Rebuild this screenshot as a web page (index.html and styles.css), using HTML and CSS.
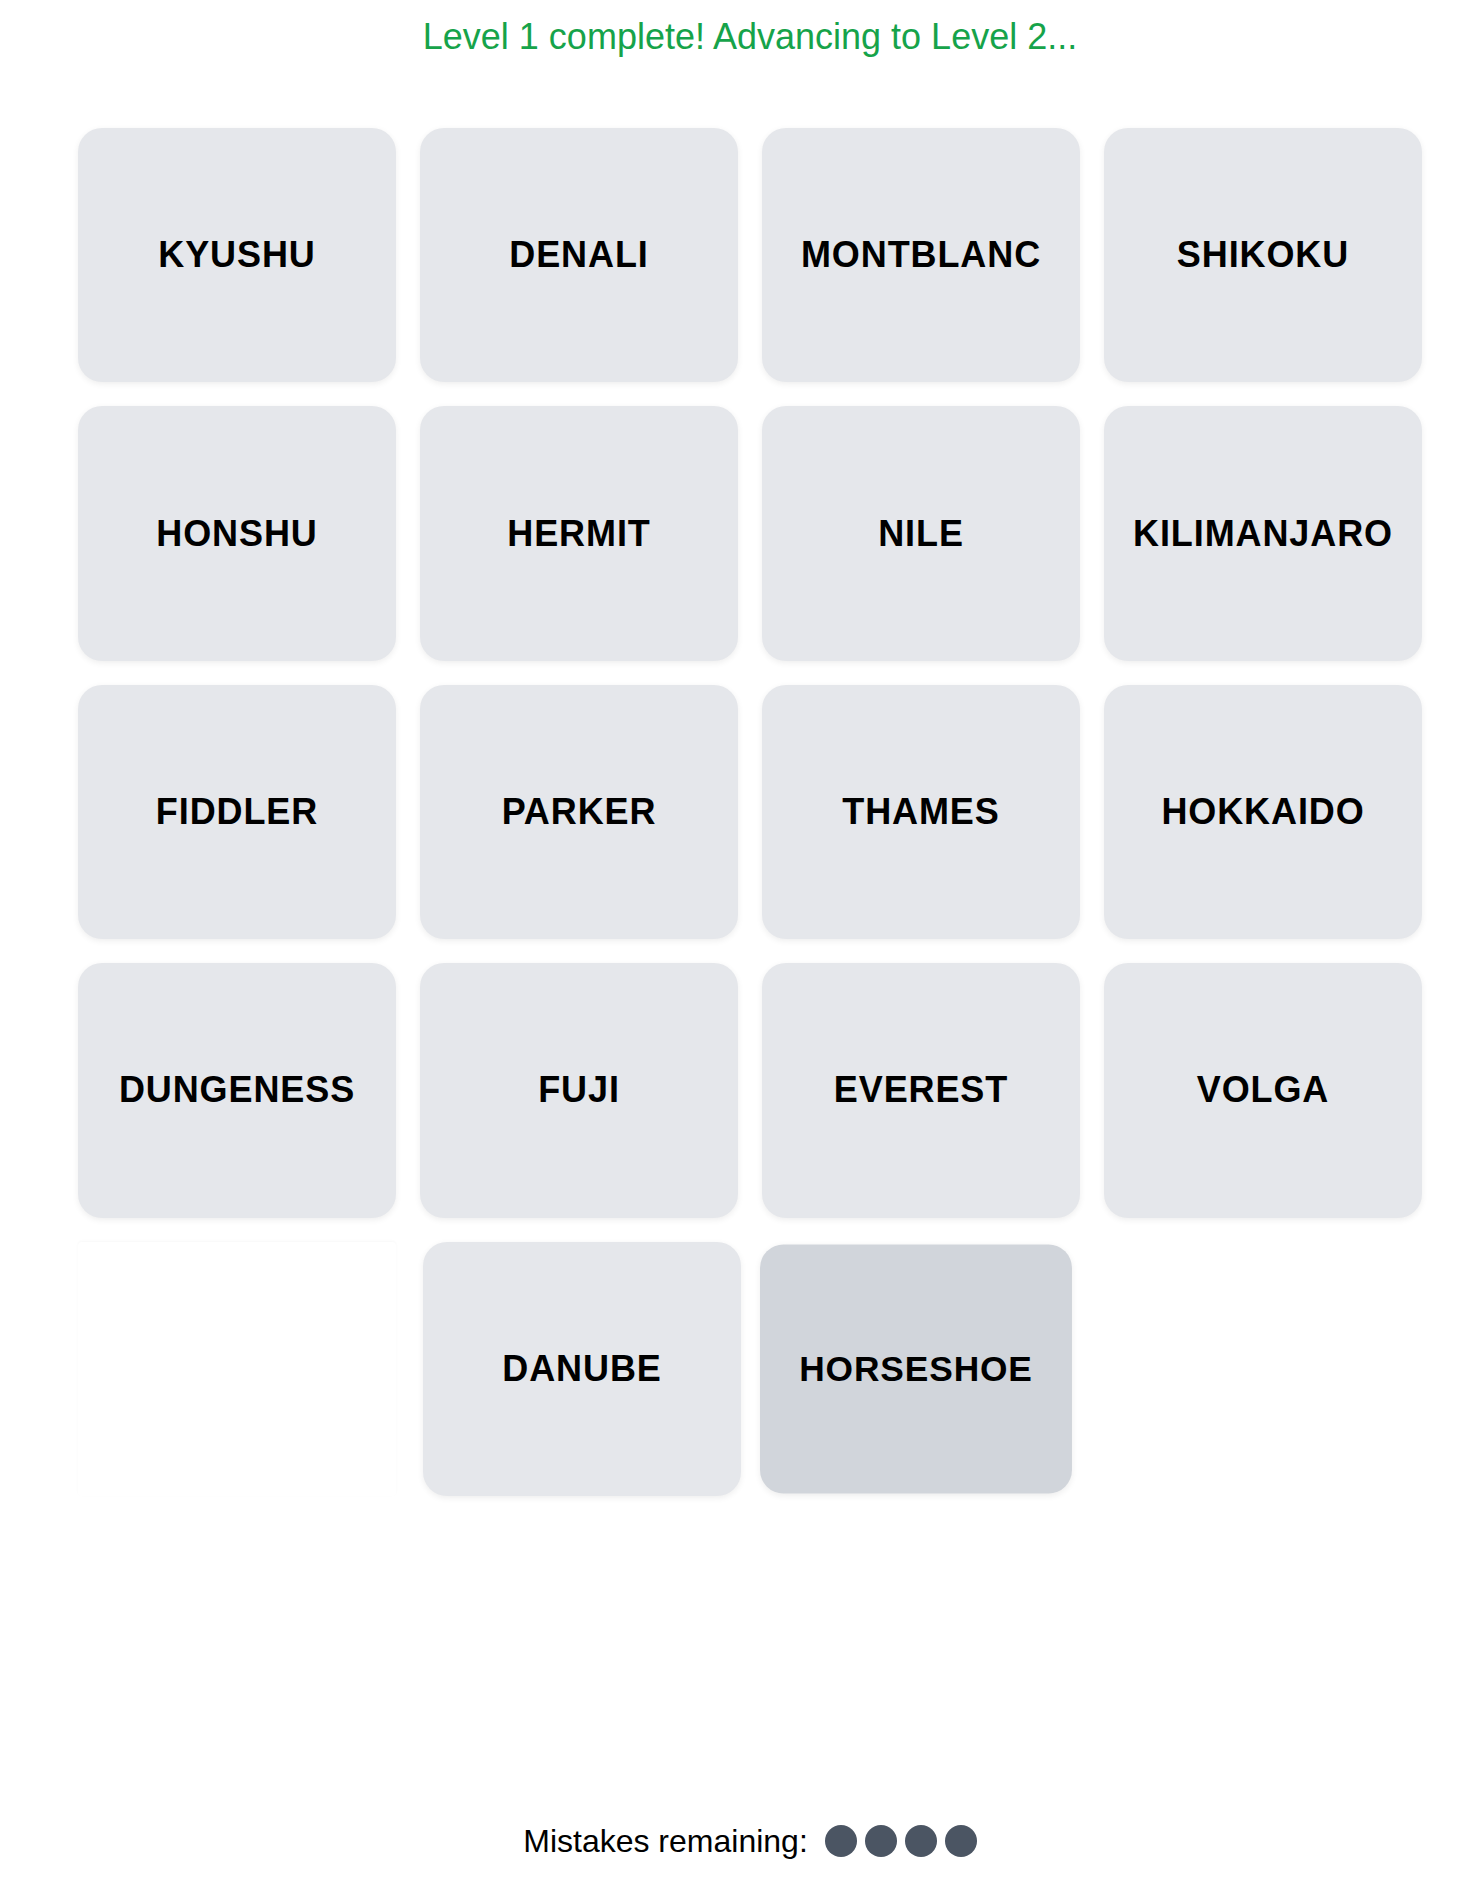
FILE: index.html
```html
<!DOCTYPE html>
<html lang="en">
<head>
<meta charset="utf-8">
<title>Connections</title>
<link rel="stylesheet" href="styles.css">
</head>
<body>
<div class="page">
  <p class="status">Level 1 complete! Advancing to Level 2...</p>
  <div class="grid">
    <div class="card">KYUSHU</div>
    <div class="card">DENALI</div>
    <div class="card">MONTBLANC</div>
    <div class="card">SHIKOKU</div>
    <div class="card">HONSHU</div>
    <div class="card">HERMIT</div>
    <div class="card">NILE</div>
    <div class="card">KILIMANJARO</div>
    <div class="card">FIDDLER</div>
    <div class="card">PARKER</div>
    <div class="card">THAMES</div>
    <div class="card">HOKKAIDO</div>
    <div class="card">DUNGENESS</div>
    <div class="card">FUJI</div>
    <div class="card">EVEREST</div>
    <div class="card">VOLGA</div>
    <div class="card card-leaving"></div>
    <div class="card card-shift">DANUBE</div>
    <div class="card card-selected">HORSESHOE</div>
  </div>
  <div class="mistakes">
    <span class="mistakes-label">Mistakes remaining:</span>
    <span class="dots">
      <span class="dot"></span>
      <span class="dot"></span>
      <span class="dot"></span>
      <span class="dot"></span>
    </span>
  </div>
</div>
</body>
</html>
```

FILE: styles.css
```css
html, body {
  margin: 0;
  padding: 0;
  background: #ffffff;
}

body {
  font-family: "Liberation Sans", Arial, sans-serif;
  color: #000000;
}

.page {
  width: 1344px;
  margin-left: 78px;
  padding-top: 16px;
}

.status {
  margin: 0;
  text-align: center;
  font-size: 36px;
  line-height: 41px;
  color: #16a34a;
}

.grid {
  margin-top: 71px;
  display: grid;
  grid-template-columns: repeat(4, 318px);
  column-gap: 24px;
  row-gap: 24px;
}

.card {
  aspect-ratio: 5 / 4;
  background: #e5e7eb;
  border-radius: 24px;
  box-shadow: 0 2px 6px rgba(0, 0, 0, 0.07);
  display: flex;
  align-items: center;
  justify-content: center;
  font-size: 36px;
  font-weight: 700;
  letter-spacing: 0.9px;
  color: #000000;
}

.card-leaving {
  background: #ffffff;
  border-radius: 4px;
  box-shadow: 0 -1px 3px rgba(0, 0, 0, 0.03);
}

.card-shift {
  transform: translateX(3px);
}

.card-selected {
  background: #d1d5db;
  transform: translateX(-5px) scale(0.981);
}

.mistakes {
  margin-top: 327px;
  display: flex;
  align-items: center;
  justify-content: center;
  gap: 17px;
  font-size: 32px;
  line-height: 37px;
  color: #000000;
}

.dots {
  display: flex;
  gap: 8px;
}

.dot {
  width: 32px;
  height: 32px;
  border-radius: 50%;
  background: #4b5563;
}
```
